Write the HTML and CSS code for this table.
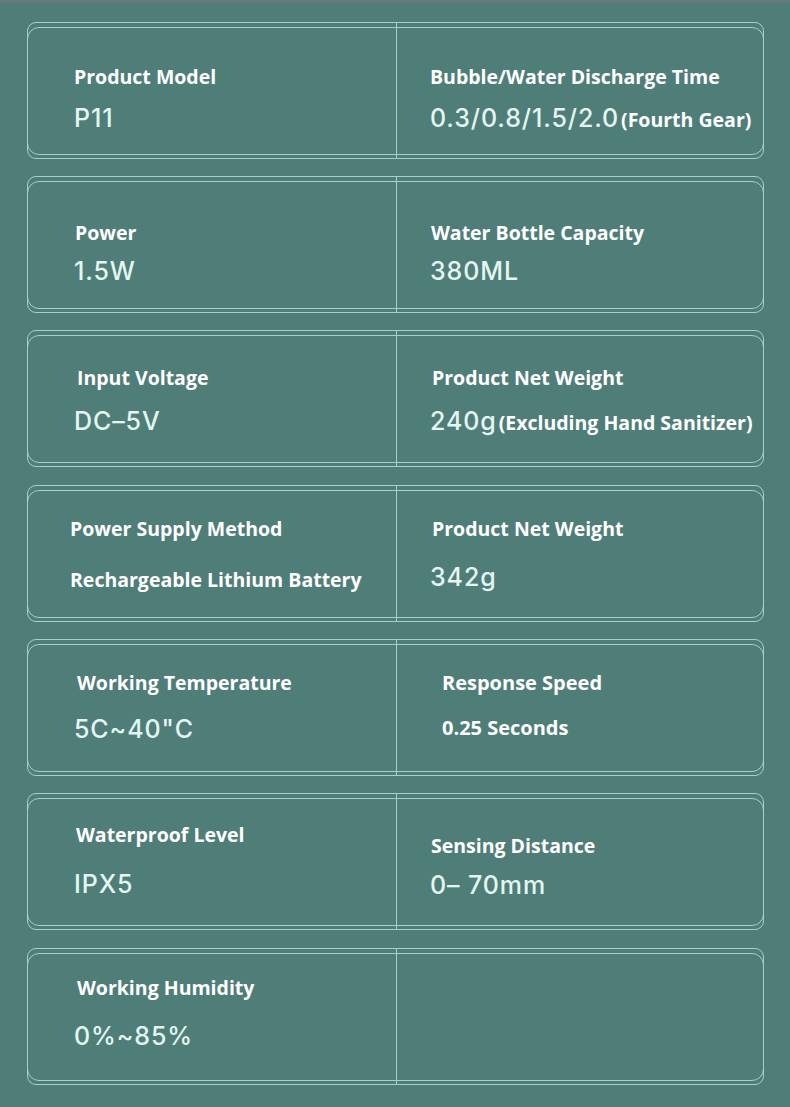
FILE: index.html
```html
<!DOCTYPE html>
<html lang="en">
<head>
  <meta charset="UTF-8">
  <meta name="viewport" content="width=device-width, initial-scale=1.0">
  <title>P11 Specifications</title>
  <link rel="stylesheet" href="styles.css">
</head>
<body>
  <div class="specs">
    <div class="spec row-1">
      <div class="cell">
        <div class="label">Product Model</div>
        <div class="value">P11</div>
      </div>
      <div class="cell right">
        <div class="label">Bubble/Water Discharge Time</div>
        <div class="value">0.3/0.8/1.5/2.0<span class="note">(Fourth Gear)</span></div>
      </div>
    </div>

    <div class="spec row-2">
      <div class="cell">
        <div class="label nudge-1">Power</div>
        <div class="value">1.5W</div>
      </div>
      <div class="cell right">
        <div class="label nudge-1">Water Bottle Capacity</div>
        <div class="value">380ML</div>
      </div>
    </div>

    <div class="spec row-3">
      <div class="cell">
        <div class="label nudge-3">Input Voltage</div>
        <div class="value">DC&ndash;5V</div>
      </div>
      <div class="cell right">
        <div class="label nudge-2">Product Net Weight</div>
        <div class="value">240g<span class="note">(Excluding Hand Sanitizer)</span></div>
      </div>
    </div>

    <div class="spec row-4">
      <div class="cell wide">
        <div class="label">Power Supply Method</div>
        <div class="value text">Rechargeable Lithium Battery</div>
      </div>
      <div class="cell right">
        <div class="label nudge-2">Product Net Weight</div>
        <div class="value">342g</div>
      </div>
    </div>

    <div class="spec row-5">
      <div class="cell">
        <div class="label nudge-3">Working Temperature</div>
        <div class="value">5C~40"C</div>
      </div>
      <div class="cell right inset">
        <div class="label">Response Speed</div>
        <div class="value text">0.25 Seconds</div>
      </div>
    </div>

    <div class="spec row-6">
      <div class="cell">
        <div class="label nudge-2">Waterproof Level</div>
        <div class="value">IPX5</div>
      </div>
      <div class="cell right">
        <div class="label nudge-1">Sensing Distance</div>
        <div class="value">0&ndash; 70mm</div>
      </div>
    </div>

    <div class="spec row-7">
      <div class="cell">
        <div class="label nudge-3">Working Humidity</div>
        <div class="value">0%~85%</div>
      </div>
      <div class="cell right"></div>
    </div>
  </div>
</body>
</html>
```

FILE: styles.css
```css
body {
  margin: 0;
  background-color: #4f7e78;
  border-top: 3px solid #667b79;
  font-family: "Open Sans", "Noto Sans", sans-serif;
  color: #ffffff;
}
.specs {
  padding: 19px 26px 0 27px;
}
.spec {
  position: relative;
  display: grid;
  grid-template-columns: 368px 1fr;
  height: 137px;
  box-sizing: border-box;
  margin-bottom: 17px;
  border: 1px solid #a3d2c8;
  border-radius: 9px;
}
.spec:nth-child(3n) {
  margin-bottom: 18px;
}
/* second outline drawn just inside the first */
.spec::before {
  content: "";
  position: absolute;
  top: 4px;
  bottom: 3px;
  left: -1px;
  right: -1px;
  border: 1px solid #a3d2c8;
  border-radius: 12px;
  pointer-events: none;
}
.cell {
  display: flex;
  flex-direction: column;
  padding: 42px 0 0 46px;
}
.cell.right {
  border-left: 1px solid #a3d2c8;
  padding-left: 33px;
}
.cell.right.inset {
  padding-left: 45px;
}
.cell.wide {
  padding-left: 42px;
}
.label {
  font-size: 19.5px;
  line-height: 24px;
  font-weight: 700;
}
.nudge-1 { margin-left: 1px; }
.nudge-2 { margin-left: 2px; }
.nudge-3 { margin-left: 3px; }
.value {
  margin-top: 14px;
  font-family: Inter, Roboto, sans-serif;
  font-size: 25px;
  font-weight: 500;
  line-height: 30px;
  letter-spacing: 0.9px;
  color: #e4f6f2;
  white-space: nowrap;
}
.value.text {
  font-family: "Open Sans", "Noto Sans", sans-serif;
  font-size: 19.5px;
  line-height: 24px;
  font-weight: 700;
  letter-spacing: 0;
  color: #ffffff;
}
.inset .label,
.inset .value.text {
  font-size: 20px;
}
.note {
  margin-left: 2px;
  font-family: "Open Sans", "Noto Sans", sans-serif;
  font-size: 19.5px;
  font-weight: 700;
  letter-spacing: 0;
  color: #ffffff;
}

/* rows were laid out by hand, so text sits a little differently in each */
.row-2 .cell { padding-top: 44px; }
.row-2 .value { margin-top: 11px; }
.row-3 .cell { padding-top: 35px; }
.row-3 .value { margin-top: 16px; }
.row-4 .cell { padding-top: 31px; }
.row-4 .value { margin-top: 21px; }
.row-4 .value.text { margin-top: 27px; }
.row-5 .cell { padding-top: 31px; }
.row-5 .value { margin-top: 19px; }
.row-5 .value.text { margin-top: 21px; }
.row-6 .cell { padding-top: 29px; }
.row-6 .value { margin-top: 22px; }
.row-6 .cell.right { padding-top: 40px; }
.row-6 .right .value { margin-top: 12px; }
.row-7 .cell { padding-top: 27px; }
.row-7 .value { margin-top: 21px; }
```
